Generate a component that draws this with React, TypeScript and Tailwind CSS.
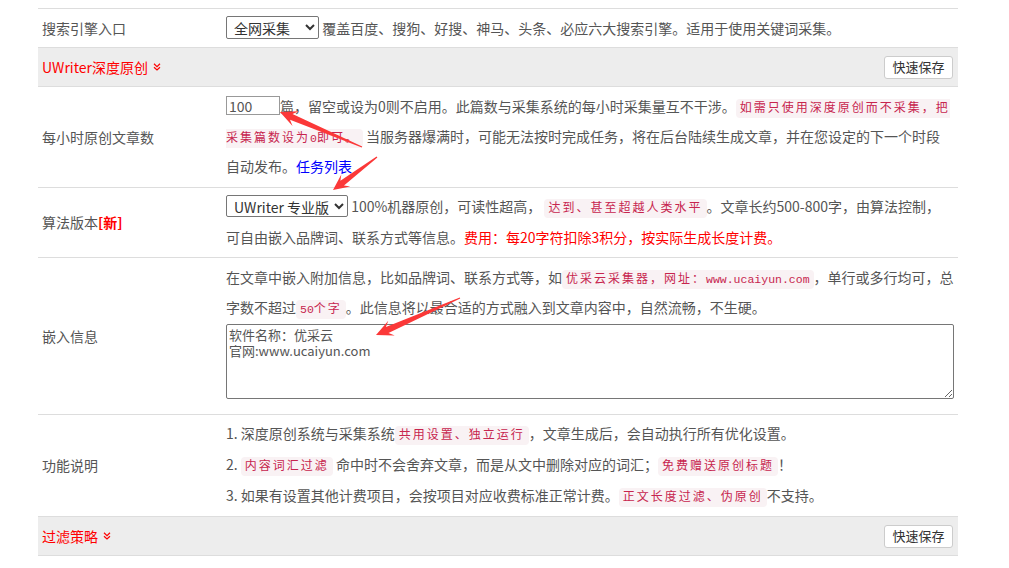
import React from 'react';

const ASCII = /^[\x00-\x7F]+$/;

function Code({ text }: { text: string }) {
  const parts = text.split(/([\x00-\x7F]+)/).filter(Boolean);
  return (
    <code className="rounded-[4px] bg-[#f9f2f4] px-1 py-[3px] font-['Liberation_Mono','Noto_Sans_CJK_SC',monospace] text-[11.5px] leading-[12px] text-[#c7254e] [box-decoration-break:slice]">
      {parts.map((p, i) =>
        ASCII.test(p) ? (
          <span key={i}>{p}</span>
        ) : (
          <span key={i} className="text-[12px] tracking-[2px]">
            {p}
          </span>
        )
      )}
    </code>
  );
}

function Row({ label, children, pad }: { label: React.ReactNode; children: React.ReactNode; pad: string }) {
  return (
    <div className="flex border-t border-[#ddd]">
      <div className="flex w-[188px] shrink-0 items-center pl-1 text-[#555]">{label}</div>
      <div className={`min-w-0 flex-1 pr-1 text-[#555] ${pad}`}>{children}</div>
    </div>
  );
}

function SectionHeader({ title }: { title: string }) {
  return (
    <div className="flex h-[39px] items-center justify-between border-t border-[#ddd] bg-[#ededed] pl-1 pr-[5px]">
      <span className="flex items-center gap-[5px] text-[#f00]">
        {title}
        <svg width="8" height="8" viewBox="0 0 8 8" fill="none" stroke="#f00" strokeWidth="1.2">
          <polyline points="1,0.8 4,3.6 7,0.8" />
          <polyline points="1,4.2 4,7 7,4.2" />
        </svg>
      </span>
      <button className="h-[23px] w-[69px] rounded-[3px] border border-[#ccc] bg-white text-[13px] text-[#333]">
        快速保存
      </button>
    </div>
  );
}

// red annotation arrow, thin tail widening toward the head
function arrow(x1: number, y1: number, x2: number, y2: number, H = 17, W = 8, w = 3.2) {
  const dx = x2 - x1;
  const dy = y2 - y1;
  const len = Math.hypot(dx, dy);
  const ux = dx / len;
  const uy = dy / len;
  const nx = -uy;
  const ny = ux;
  const bx = x2 - ux * H * 0.72;
  const by = y2 - uy * H * 0.72;
  const hx = x2 - ux * H;
  const hy = y2 - uy * H;
  const pts = [
    [x1 + nx * 0.6, y1 + ny * 0.6],
    [bx + nx * w, by + ny * w],
    [hx + nx * W, hy + ny * W],
    [x2, y2],
    [hx - nx * W, hy - ny * W],
    [bx - nx * w, by - ny * w],
    [x1 - nx * 0.6, y1 - ny * 0.6],
  ];
  return pts.map((p) => `${p[0].toFixed(1)},${p[1].toFixed(1)}`).join(' ');
}

export default function App() {
  return (
    <div className="relative h-[568px] w-[1009px] overflow-hidden bg-white font-['Noto_Sans_CJK_SC',sans-serif] text-[14px]">
      <div className="ml-[38px] w-[920px] pt-[8px]">
        <Row label="搜索引擎入口" pad="py-1 leading-[30px]">
          <select
            defaultValue="all"
            className="mt-[3px] h-[23px] w-[93px] rounded-[2px] border border-[#767676] pl-[3px] align-top text-[14px] leading-[20px] text-[#333]"
          >
            <option value="all">全网采集</option>
          </select>{' '}
          覆盖百度、搜狗、好搜、神马、头条、必应六大搜索引擎。适用于使用关键词采集。
        </Row>

        <SectionHeader title="UWriter深度原创" />

        <Row label="每小时原创文章数" pad="pt-[4px] pb-[6px] leading-[30px]">
          <input
            defaultValue="100"
            className="mt-[5px] h-[19px] w-[54px] border border-[#999] px-[2px] align-top text-[14px] leading-[17px] text-[#555]"
          />
          篇，留空或设为0则不启用。此篇数与采集系统的每小时采集量互不干涉。
          <Code text="如需只使用深度原创而不采集，把采集篇数设为0即可。" /> 当服务器爆满时，可能无法按时完成任务，将在后台陆续生成文章，并在您设定的下一个时段自动发布。
          <a href="#tasks" className="text-[#00f]">
            任务列表
          </a>
        </Row>

        <Row
          label={
            <>
              算法版本<b className="text-[#f00]">[新]</b>
            </>
          }
          pad="pt-[3px] pb-[4px] leading-[31px]"
        >
          <select
            defaultValue="pro"
            className="mt-[4px] h-[22px] w-[122px] rounded-[2px] border border-[#767676] pl-[3px] align-top text-[14px] leading-[20px] text-[#333]"
          >
            <option value="pro">UWriter 专业版</option>
          </select>{' '}
          100%机器原创，可读性超高， <Code text="达到、甚至超越人类水平" />。文章长约500-800字，由算法控制，
          <br />
          可自由嵌入品牌词、联系方式等信息。
          <span className="text-[#f00]">费用：每20字符扣除3积分，按实际生成长度计费。</span>
        </Row>

        <Row label="嵌入信息" pad="pt-[4px] pb-[5px] leading-[30px]">
          在文章中嵌入附加信息，比如品牌词、联系方式等，如
          <Code text="优采云采集器，网址：www.ucaiyun.com" />
          ，单行或多行均可，总字数不超过
          <Code text="50个字" />
          。此信息将以最合适的方式融入到文章内容中，自然流畅，不生硬。
          <textarea
            defaultValue={'软件名称：优采云\n官网:www.ucaiyun.com'}
            className="mb-[10px] mt-[2px] block h-[75px] w-full rounded-[2px] border border-[#767676] px-[2px] py-[2px] text-[13px] leading-[16px] text-[#555]"
          />
        </Row>

        <Row label="功能说明" pad="pt-[3px] pb-[5px] leading-[31px]">
          <div>
            1. 深度原创系统与采集系统
            <Code text="共用设置、独立运行" />
            ，文章生成后，会自动执行所有优化设置。
          </div>
          <div>
            2. <Code text="内容词汇过滤" /> 命中时不会舍弃文章，而是从文中删除对应的词汇；
            <Code text="免费赠送原创标题" />！
          </div>
          <div>
            3. 如果有设置其他计费项目，会按项目对应收费标准正常计费。
            <Code text="正文长度过滤、伪原创" />
            不支持。
          </div>
        </Row>

        <SectionHeader title="过滤策略" />

        <Row label="标题过滤" pad="pt-[4px] pb-[5px] leading-[30px]">
          标题中包含以下任意词汇时，
          <Code text="整篇舍弃" /> 不再生成原创文章。
        </Row>
      </div>

      <svg className="pointer-events-none absolute left-0 top-0" width="1009" height="568">
        <polygon points={arrow(362, 147, 280, 112)} fill="#fb3838" />
        <polygon points={arrow(377, 157, 333, 190, 16, 7.5, 3)} fill="#fb3838" />
        <polygon points={arrow(460, 298, 376, 335)} fill="#fb3838" />
      </svg>
    </div>
  );
}
